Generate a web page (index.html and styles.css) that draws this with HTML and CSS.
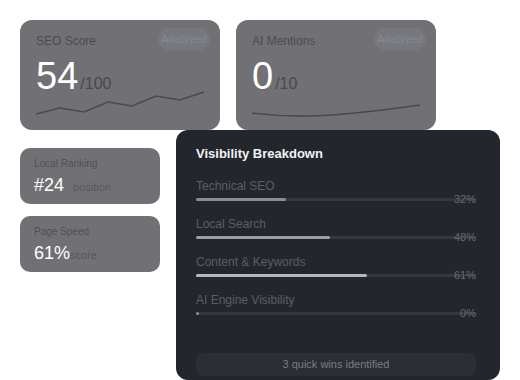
FILE: index.html
```html
<!DOCTYPE html>
<html lang="en">
<head>
    <meta charset="UTF-8">
    <meta name="viewport" content="width=device-width, initial-scale=1.0">
    <title>Visibility Overview</title>
    <link rel="stylesheet" href="styles.css">
</head>
<body>
<div class="board">
    <div class="top-row">
        <div class="stat-card">
            <span class="badge">Analyzed</span>
            <div class="stat-label">SEO Score</div>
            <div class="stat-value"><span class="big">54</span><span class="of">/100</span></div>
            <svg class="spark" width="168" height="26" viewBox="0 0 168 26">
                <polyline points="0,23 24,17 48,21 72,11 96,15 120,5 144,9 168,1" fill="none" stroke="#4a4b50" stroke-width="1.5"/>
            </svg>
        </div>
        <div class="stat-card">
            <span class="badge">Analyzed</span>
            <div class="stat-label">AI Mentions</div>
            <div class="stat-value"><span class="big">0</span><span class="of">/10</span></div>
            <svg class="spark" width="168" height="26" viewBox="0 0 168 26">
                <path d="M0 22 Q 40 27 80 24 T 168 14" fill="none" stroke="#4a4b50" stroke-width="1.5"/>
            </svg>
        </div>
    </div>

    <div class="bottom-row">
        <div class="side">
            <div class="mini-card">
                <div class="mini-label">Local Ranking</div>
                <div class="mini-value"><span class="mini-num">#24</span><span class="mini-unit spaced">position</span></div>
            </div>
            <div class="mini-card">
                <div class="mini-label">Page Speed</div>
                <div class="mini-value"><span class="mini-num">61%</span><span class="mini-unit">score</span></div>
            </div>
        </div>

        <div class="panel">
            <h3>Visibility Breakdown</h3>

            <div class="metric">
                <div class="metric-name">Technical SEO</div>
                <div class="bar-line">
                    <div class="track"><div class="fill fill-low" style="width: 32%"></div></div>
                    <span class="pct">32%</span>
                </div>
            </div>
            <div class="metric">
                <div class="metric-name">Local Search</div>
                <div class="bar-line">
                    <div class="track"><div class="fill fill-mid" style="width: 48%"></div></div>
                    <span class="pct">48%</span>
                </div>
            </div>
            <div class="metric">
                <div class="metric-name">Content &amp; Keywords</div>
                <div class="bar-line">
                    <div class="track"><div class="fill fill-high" style="width: 61%"></div></div>
                    <span class="pct">61%</span>
                </div>
            </div>
            <div class="metric">
                <div class="metric-name">AI Engine Visibility</div>
                <div class="bar-line">
                    <div class="track"><div class="fill fill-low" style="width: 3px"></div></div>
                    <span class="pct">0%</span>
                </div>
            </div>

            <div class="wins">3 quick wins identified</div>
        </div>
    </div>
</div>
</body>
</html>
```

FILE: styles.css
```css
body {
    font-family: "Liberation Sans", Arial, sans-serif;
    background: #ffffff;
    margin: 0;
    padding: 0;
    overflow: hidden;
}
.board {
    padding: 20px 0 0 20px;
}
.top-row {
    display: flex;
    gap: 16px;
}
.stat-card {
    position: relative;
    width: 200px;
    height: 110px;
    box-sizing: border-box;
    padding: 14px 16px;
    background: #717175;
    border-radius: 12px;
}
.badge {
    position: absolute;
    top: 8px;
    right: 10px;
    width: 52px;
    height: 22px;
    line-height: 22px;
    text-align: center;
    font-size: 11px;
    color: #838899;
    background: #77787c;
    border-radius: 11px;
}
.stat-label {
    font-size: 12px;
    line-height: 14px;
    color: #4a4b50;
}
.stat-value {
    margin-top: 9px;
    display: flex;
    align-items: baseline;
}
.big {
    font-size: 38px;
    line-height: 38px;
    color: #ffffff;
}
.of {
    margin-left: 2px;
    font-size: 16px;
    color: #48494e;
}
.spark {
    display: block;
    margin-top: -4px;
}
.bottom-row {
    display: flex;
    gap: 16px;
    align-items: flex-start;
}
.side {
    display: flex;
    flex-direction: column;
    gap: 12px;
    margin-top: 18px;
}
.mini-card {
    width: 140px;
    height: 56px;
    box-sizing: border-box;
    padding: 10px 14px;
    background: #717175;
    border-radius: 10px;
}
.mini-label {
    font-size: 10px;
    line-height: 12px;
    color: #4f5055;
}
.mini-value {
    margin-top: 5px;
    display: flex;
    align-items: baseline;
}
.mini-num {
    font-size: 18px;
    line-height: 20px;
    color: #ffffff;
}
.mini-unit {
    font-size: 11px;
    color: #56575c;
}
.mini-unit.spaced {
    margin-left: 9px;
}
.panel {
    width: 324px;
    height: 250px;
    box-sizing: border-box;
    padding: 16px 24px 4px 20px;
    background: #24262d;
    border-radius: 12px;
    display: flex;
    flex-direction: column;
}
.panel h3 {
    margin: 0 0 17px;
    font-size: 13px;
    line-height: 16px;
    color: #f2f3f5;
}
.metric {
    margin-bottom: 12px;
}
.metric-name {
    font-size: 12px;
    line-height: 14px;
    color: #5b5e64;
}
.bar-line {
    display: grid;
    align-items: center;
    height: 12px;
}
.track, .pct {
    grid-area: 1 / 1;
}
.track {
    height: 3px;
    background: #363840;
    border-radius: 2px;
}
.fill {
    height: 3px;
    border-radius: 2px;
}
.fill-low {
    background: #8b8c90;
}
.fill-mid {
    background: #9d9ea2;
}
.fill-high {
    background: #b7b8bb;
}
.pct {
    justify-self: end;
    font-size: 11px;
    line-height: 12px;
    color: #686a70;
}
.wins {
    margin-top: auto;
    height: 23px;
    line-height: 23px;
    text-align: center;
    font-size: 11px;
    color: #7b7d83;
    background: #2c2e35;
    border-radius: 6px;
}
```
